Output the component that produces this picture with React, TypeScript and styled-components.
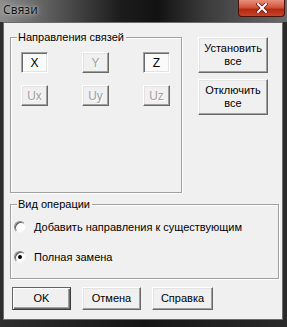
import React from 'react';
import styled, { createGlobalStyle, css } from 'styled-components';

const GlobalStyle = createGlobalStyle`
  html, body {
    margin: 0;
    padding: 0;
    background: #1e1e1e;
  }
  body {
    font-family: "Liberation Sans", Arial, sans-serif;
    font-size: 11px;
    font-weight: normal;
    color: #000;
  }
`;

const Window = styled.div`
  width: 287px;
  height: 327px;
  display: flex;
  flex-direction: column;
  background: linear-gradient(90deg, #2e2e2e 0%, #161616 50%, #2a2a2a 100%);
  box-sizing: border-box;
  overflow: hidden;
`;

const TitleBar = styled.div`
  height: 22px;
  flex: none;
  display: flex;
  align-items: flex-start;
  justify-content: space-between;
  background: linear-gradient(90deg, #8c8c8c 0%, #5a5a5a 18%, #1c1c1c 42%, #121212 55%, #3c3c3c 72%, #6a6a6a 100%);
`;

const Title = styled.div`
  font-family: "Noto Sans", "DejaVu Sans", sans-serif;
  font-size: 12px;
  line-height: 20px;
  padding-left: 3px;
  color: #111;
  text-shadow: 0 0 6px rgba(255, 255, 255, 0.7), 0 0 2px rgba(255, 255, 255, 0.5);
`;

const CloseButton = styled.div`
  width: 47px;
  height: 17px;
  margin-right: 2px;
  box-sizing: border-box;
  border: 1px solid #4a120a;
  border-top: none;
  border-radius: 0 0 4px 4px;
  background: linear-gradient(180deg, #e8907c 0%, #d2583e 45%, #b42812 60%, #cc4226 100%);
  display: flex;
  align-items: center;
  justify-content: center;
`;

const Client = styled.div`
  flex: 1;
  margin: 0 4px 7px 3px;
  background: #f0f0f0;
  border: 1px solid #6c6c6c;
  padding: 7px 0 0 6px;
  box-sizing: border-box;
  display: flex;
  flex-direction: column;
`;

const TopRow = styled.div`
  display: flex;
  align-items: flex-start;
`;

const Group = styled.fieldset<{ $w: number; $h: number }>`
  margin: 0;
  width: ${p => p.$w}px;
  height: ${p => p.$h}px;
  box-sizing: border-box;
  border: 1px solid #a0a0a0;
  box-shadow: inset 1px 1px 0 #fff, 1px 1px 0 #fff;
  padding: 0;
  min-inline-size: 0;
`;

const Legend = styled.legend`
  margin-left: 6px;
  padding: 0 2px 0 1px;
  line-height: 14px;
  background: #f0f0f0;
`;

const ToggleGrid = styled.div`
  display: grid;
  grid-template-columns: repeat(3, 27px);
  grid-auto-rows: 21px;
  column-gap: 34px;
  row-gap: 12px;
  padding: 8px 0 0 10px;
`;

const raised = css`
  border: 1px solid;
  border-color: #fff #696969 #696969 #fff;
  box-shadow: inset -1px -1px 0 #a0a0a0, inset 1px 1px 0 #e3e3e3;
  background: #f0f0f0;
`;

const sunken = css`
  border: 1px solid;
  border-color: #a0a0a0 #fff #fff #a0a0a0;
  box-shadow: inset 1px 1px 0 #696969, inset -1px -1px 0 #e3e3e3;
  background: #fafafa;
`;

const Toggle = styled.div<{ $on?: boolean; $disabled?: boolean }>`
  box-sizing: border-box;
  display: flex;
  align-items: center;
  justify-content: center;
  font-size: 12px;
  ${p => (p.$on ? sunken : raised)}
  color: ${p => (p.$disabled ? '#a0a0a0' : '#000')};
  text-shadow: ${p => (p.$disabled ? '1px 1px 0 #fff' : 'none')};
`;

const SideColumn = styled.div`
  display: flex;
  flex-direction: column;
  gap: 6px;
  margin: 7px 0 0 16px;
`;

const Button = styled.div<{ $w: number; $h: number; $default?: boolean }>`
  width: ${p => p.$w}px;
  height: ${p => p.$h}px;
  box-sizing: border-box;
  ${raised}
  ${p =>
    p.$default &&
    css`
      border-color: #646464 #3c3c3c #3c3c3c #646464;
      box-shadow: inset 1px 1px 0 #fff, inset -1px -1px 0 #696969, inset -2px -2px 0 #a0a0a0;
    `}
  display: flex;
  align-items: center;
  justify-content: center;
  text-align: center;
  font-weight: 400;
  line-height: 13px;
`;

const OpGroup = styled(Group)`
  margin-top: 4px;
`;

const RadioList = styled.div`
  display: flex;
  flex-direction: column;
  gap: 10px;
  padding: 6px 0 0 3px;
`;

const RadioRow = styled.div`
  display: flex;
  align-items: center;
  height: 20px;
  gap: 8px;
`;

const RadioDot = styled.span<{ $checked?: boolean }>`
  width: 12px;
  height: 12px;
  box-sizing: border-box;
  border-radius: 50%;
  border: 1px solid;
  border-color: #8a8a8a #f4f4f4 #f4f4f4 #8a8a8a;
  box-shadow: inset 1px 1px 0 #5a5a5a;
  background: #fff;
  display: flex;
  align-items: center;
  justify-content: center;
  &::after {
    content: '';
    width: 4px;
    height: 4px;
    border-radius: 50%;
    background: ${p => (p.$checked ? '#000' : 'transparent')};
  }
`;

const ButtonRow = styled.div`
  display: flex;
  gap: 11px;
  margin: 8px 0 0 2px;
`;

const directions: { label: string; on?: boolean; disabled?: boolean }[] = [
  { label: 'X', on: true },
  { label: 'Y', disabled: true },
  { label: 'Z', on: true },
  { label: 'Ux', disabled: true },
  { label: 'Uy', disabled: true },
  { label: 'Uz', disabled: true },
];

const App: React.FC = () => {
  return (
    <React.Fragment>
      <GlobalStyle />
      <Window>
        <TitleBar>
          <Title>Связи</Title>
          <CloseButton>
            <svg width="12" height="10" viewBox="0 0 12 10">
              <path d="M2 1 L10 9 M10 1 L2 9" stroke="#5a140a" strokeWidth="3.4" strokeLinecap="square" />
              <path d="M2 1 L10 9 M10 1 L2 9" stroke="#fff" strokeWidth="2" strokeLinecap="square" />
            </svg>
          </CloseButton>
        </TitleBar>
        <Client>
          <TopRow>
            <Group $w={172} $h={163}>
              <Legend>Направления связей</Legend>
              <ToggleGrid>
                {directions.map(d => (
                  <Toggle key={d.label} $on={d.on} $disabled={d.disabled}>
                    {d.label}
                  </Toggle>
                ))}
              </ToggleGrid>
            </Group>
            <SideColumn>
              <Button $w={70} $h={36}>
                Установить
                <br />
                все
              </Button>
              <Button $w={70} $h={36}>
                Отключить
                <br />
                все
              </Button>
            </SideColumn>
          </TopRow>
          <OpGroup $w={269} $h={82}>
            <Legend>Вид операции</Legend>
            <RadioList>
              <RadioRow>
                <RadioDot />
                Добавить направления к существующим
              </RadioRow>
              <RadioRow>
                <RadioDot $checked />
                Полная замена
              </RadioRow>
            </RadioList>
          </OpGroup>
          <ButtonRow>
            <Button $w={59} $h={23} $default>
              OK
            </Button>
            <Button $w={59} $h={23}>
              Отмена
            </Button>
            <Button $w={61} $h={23}>
              Справка
            </Button>
          </ButtonRow>
        </Client>
      </Window>
    </React.Fragment>
  );
};

export default App;
